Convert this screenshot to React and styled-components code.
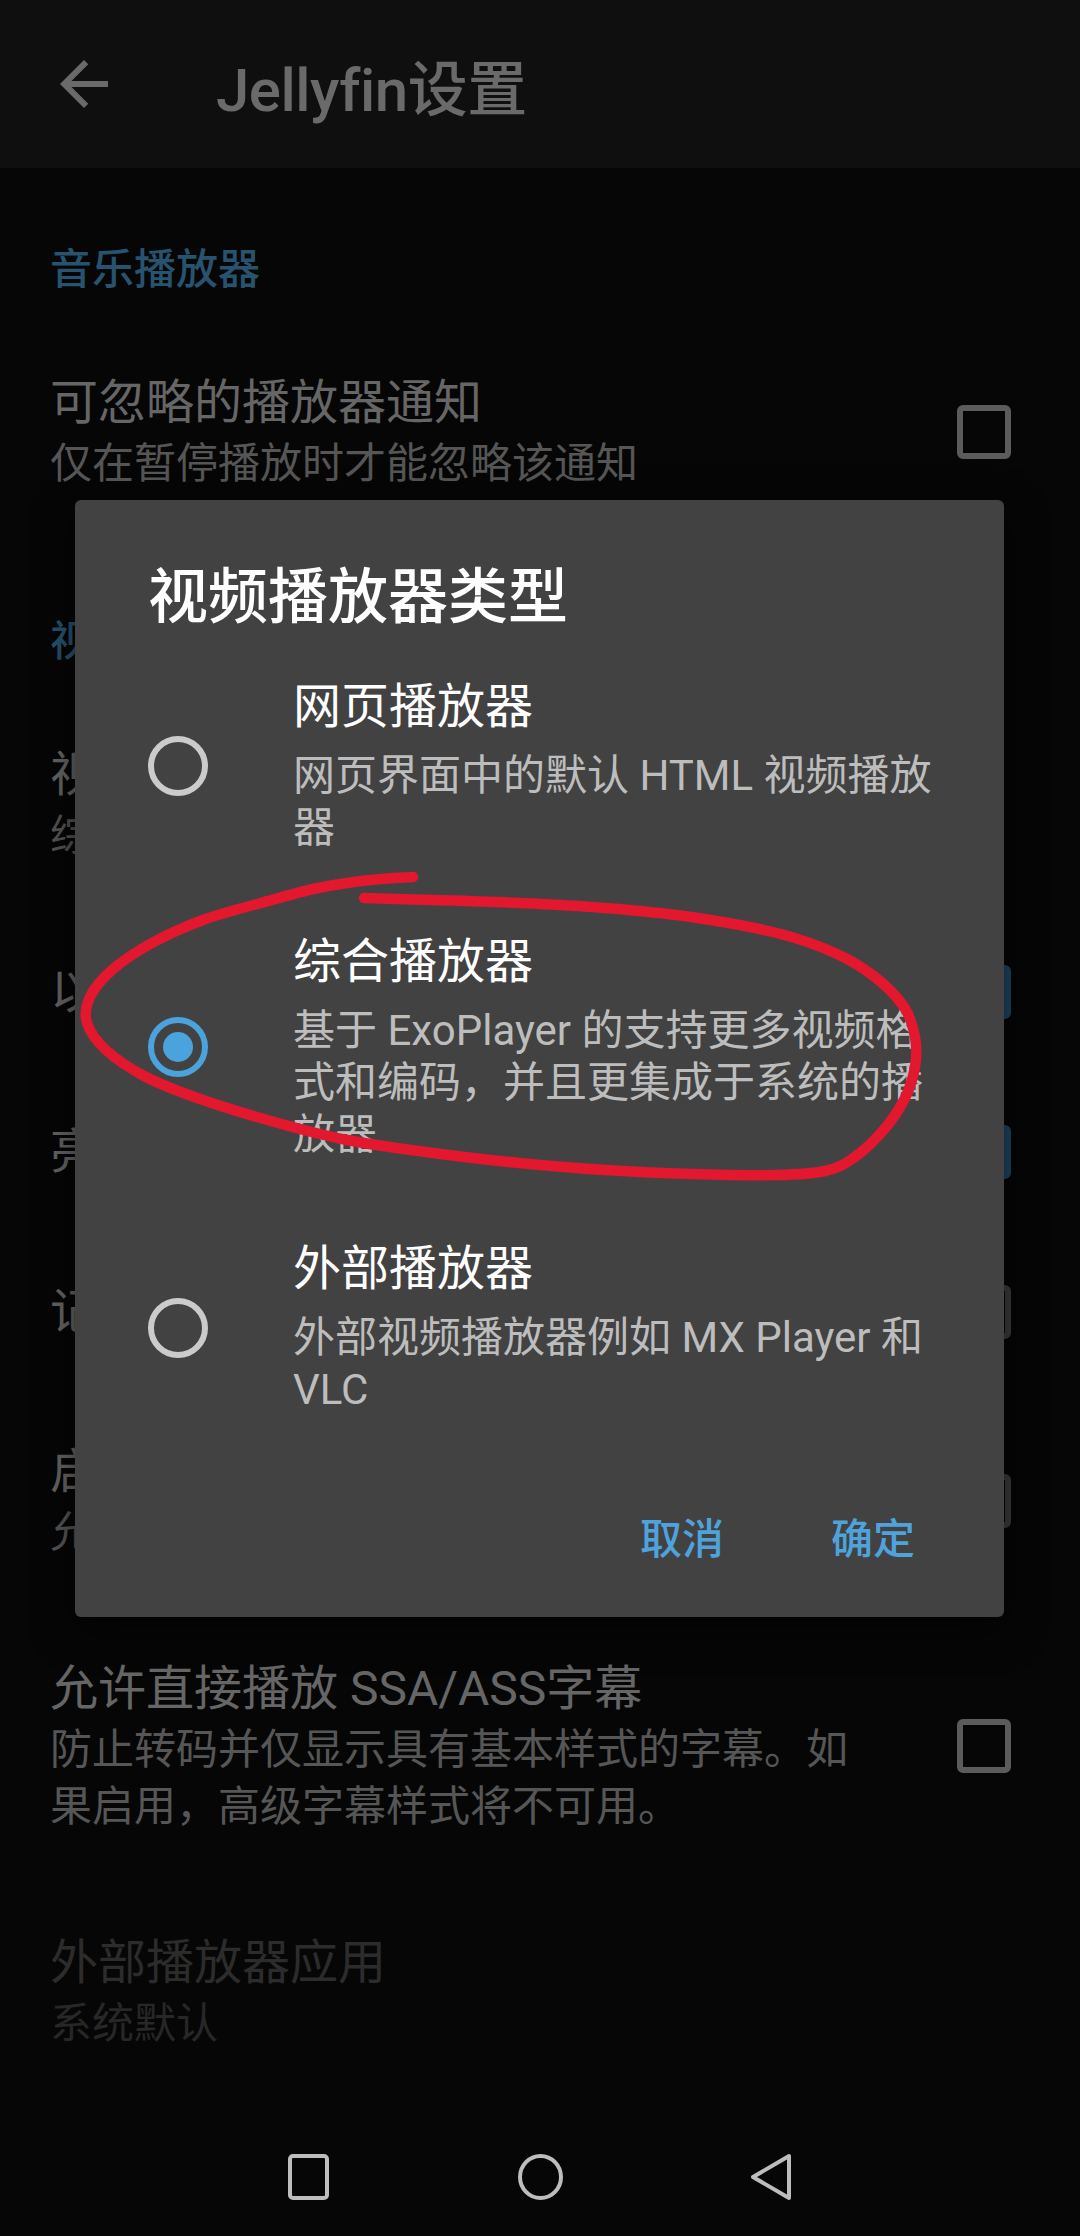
import React from 'react'
import styled, { createGlobalStyle } from 'styled-components'

const GlobalStyle = createGlobalStyle`
  html, body {
    margin: 0;
    padding: 0;
    background: #060606;
  }
  body {
    font-family: Roboto, "Noto Sans CJK SC", sans-serif;
  }
`

const prefs = [
  { type: 'category', title: '音乐播放器' },
  { title: '可忽略的播放器通知', summary: ['仅在暂停播放时才能忽略该通知'], box: 'off' },
  { type: 'category', title: '视频播放器' },
  { title: '视频播放器类型', summary: ['综合播放器'] },
  { title: '以横屏方向开始横屏视频', box: 'on' },
  { title: '亮度和音量手势', box: 'on' },
  { title: '记住亮度', box: 'dim' },
  { title: '启用后台音频', summary: ['允许在后台播放视频的音频'], box: 'dim' },
  {
    title: '允许直接播放 SSA/ASS字幕',
    summary: ['防止转码并仅显示具有基本样式的字幕。如果启用，高级字幕样式将不可用。'],
    box: 'off',
  },
  { title: '外部播放器应用', summary: ['系统默认'], disabled: true },
]

const options = [
  { title: '网页播放器', summary: '网页界面中的默认 HTML 视频播放器' },
  { title: '综合播放器', summary: '基于 ExoPlayer 的支持更多视频格式和编码，并且更集成于系统的播放器', checked: true },
  { title: '外部播放器', summary: '外部视频播放器例如 MX Player 和 VLC' },
]

// hand drawn red circle, traced from the screenshot
const scribble = [
  [413, 877], [370, 880], [318, 888], [261, 903], [203, 920], [152, 943], [112, 970],
  [90, 997], [87, 1023], [106, 1050], [146, 1077], [203, 1100], [278, 1123], [347, 1140],
  [433, 1153], [519, 1163], [605, 1170], [691, 1174], [777, 1175], [825, 1171], [852, 1159],
  [881, 1133], [904, 1100], [915, 1067], [915, 1037], [904, 1007], [875, 977], [835, 953],
  [777, 933], [691, 917], [605, 908], [519, 903], [433, 900], [364, 898],
]

const smoothPath = (pts) => {
  let d = `M${pts[0][0]},${pts[0][1]}`
  for (let i = 0; i < pts.length - 1; i++) {
    const p0 = pts[i - 1] || pts[i]
    const p1 = pts[i]
    const p2 = pts[i + 1]
    const p3 = pts[i + 2] || p2
    const c1x = p1[0] + (p2[0] - p0[0]) / 6
    const c1y = p1[1] + (p2[1] - p0[1]) / 6
    const c2x = p2[0] - (p3[0] - p1[0]) / 6
    const c2y = p2[1] - (p3[1] - p1[1]) / 6
    d += ` C${c1x.toFixed(1)},${c1y.toFixed(1)} ${c2x.toFixed(1)},${c2y.toFixed(1)} ${p2[0]},${p2[1]}`
  }
  return d
}

const App = () => {
  return (
    <>
      <GlobalStyle />
      <Screen>
        <AppBar>
          <BackButton>
            <svg width="72" height="72" viewBox="0 0 24 24">
              <path fill="#6a6a6a" d="M20 11H7.83l5.59-5.59L12 4l-8 8 8 8 1.41-1.41L7.83 13H20v-2z" />
            </svg>
          </BackButton>
          <BarTitle>Jellyfin设置</BarTitle>
        </AppBar>

        <PrefList>
          {prefs.map((p, i) =>
            p.type === 'category' ? (
              <Category key={i}>{p.title}</Category>
            ) : (
              <Pref key={i}>
                <PrefBody>
                  <PrefTitle $disabled={p.disabled}>{p.title}</PrefTitle>
                  {p.summary && <PrefSummary $disabled={p.disabled}>{p.summary}</PrefSummary>}
                </PrefBody>
                {p.box && <CheckBox $state={p.box} />}
              </Pref>
            )
          )}
        </PrefList>

        <NavBar>
          <NavSlot>
            <svg width="60" height="60" viewBox="0 0 60 60">
              <rect x="12" y="9" width="37" height="42" rx="3" fill="none" stroke="#bdbdbd" strokeWidth="4" />
            </svg>
          </NavSlot>
          <NavSlot>
            <svg width="60" height="60" viewBox="0 0 60 60">
              <ellipse cx="30.5" cy="30" rx="20.5" ry="21" fill="none" stroke="#bdbdbd" strokeWidth="4" />
            </svg>
          </NavSlot>
          <NavSlot>
            <svg width="60" height="60" viewBox="0 0 60 60">
              <path d="M47 9 L47 51 L11 30 Z" fill="none" stroke="#bdbdbd" strokeWidth="4" strokeLinejoin="round" />
            </svg>
          </NavSlot>
        </NavBar>

        <Dialog>
          <DialogTitle>视频播放器类型</DialogTitle>
          <OptionList>
            {options.map((o) => (
              <Option key={o.title}>
                <Radio $checked={o.checked} />
                <OptionText>
                  <OptionTitle>{o.title}</OptionTitle>
                  <OptionSummary>{o.summary}</OptionSummary>
                </OptionText>
              </Option>
            ))}
          </OptionList>
          <ButtonBar>
            <TextButton>取消</TextButton>
            <TextButton>确定</TextButton>
          </ButtonBar>
        </Dialog>

        <Annotation width="1080" height="2236" viewBox="0 0 1080 2236">
          <path
            d={smoothPath(scribble)}
            fill="none"
            stroke="#e3172d"
            strokeWidth="10.5"
            strokeLinecap="round"
            strokeLinejoin="round"
          />
        </Annotation>
      </Screen>
    </>
  )
}

const Screen = styled.div`
  position: relative;
  width: 1080px;
  height: 2236px;
  overflow: hidden;
  display: flex;
  flex-direction: column;
  background: #060606;
`

const AppBar = styled.header`
  height: 168px;
  flex-shrink: 0;
  display: flex;
  align-items: center;
  background: #0f0f0f;
`

const BackButton = styled.div`
  width: 72px;
  height: 72px;
  margin-left: 48px;
  display: flex;
`

const BarTitle = styled.h1`
  margin: 0 0 0 96px;
  font-size: 60px;
  font-weight: 500;
  color: #6a6a6a;
  letter-spacing: -0.5px;
`

const PrefList = styled.div`
  flex: 1;
  overflow: hidden;
`

const Category = styled.div`
  padding: 74px 48px 25px 50px;
  font-size: 42px;
  line-height: 56px;
  font-weight: 500;
  color: #27536f;
`

const Pref = styled.div`
  display: flex;
  align-items: center;
  gap: 87px;
  padding: 48px 69px 48px 50px;
`

const PrefBody = styled.div`
  flex: 1;
  min-width: 0;
`

const PrefTitle = styled.div`
  font-size: 48px;
  line-height: 64px;
  color: ${(p) => (p.$disabled ? '#2c2c2c' : '#666666')};
`

const PrefSummary = styled.div`
  font-size: 42px;
  line-height: 57px;
  color: ${(p) => (p.$disabled ? '#272727' : '#565656')};
`

const boxColors = {
  on: { border: '#1f4560', fill: '#1f4560' },
  off: { border: '#5b5b5b', fill: 'transparent' },
  dim: { border: '#3c3c3c', fill: 'transparent' },
}

const CheckBox = styled.div`
  width: 54px;
  height: 54px;
  flex-shrink: 0;
  box-sizing: border-box;
  border-radius: 6px;
  border: 6px solid ${(p) => boxColors[p.$state].border};
  background: ${(p) => boxColors[p.$state].fill};
`

const NavBar = styled.nav`
  height: 118px;
  flex-shrink: 0;
  display: flex;
  justify-content: center;
  align-items: center;
`

const NavSlot = styled.div`
  width: 232px;
  display: flex;
  justify-content: center;
`

const Dialog = styled.div`
  position: absolute;
  top: 500px;
  left: 75px;
  width: 929px;
  padding-top: 62px;
  background: #424242;
  border-radius: 6px;
  box-shadow: 0 12px 40px rgba(0, 0, 0, 0.6);
`

const DialogTitle = styled.h2`
  margin: 0;
  padding: 0 54px 4px 73px;
  font-size: 60px;
  line-height: 72px;
  font-weight: 500;
  color: #ffffff;
`

const OptionList = styled.div`
  padding: 0 54px 0 73px;
`

const Option = styled.div`
  display: flex;
  align-items: center;
  gap: 85px;
  padding: 39px 0;
`

const Radio = styled.div`
  position: relative;
  width: 60px;
  height: 60px;
  flex-shrink: 0;
  box-sizing: border-box;
  border-radius: 50%;
  border: 6px solid ${(p) => (p.$checked ? '#4aa3dc' : '#cbcbcb')};

  &::after {
    content: '';
    display: ${(p) => (p.$checked ? 'block' : 'none')};
    position: absolute;
    top: 9px;
    left: 9px;
    width: 30px;
    height: 30px;
    border-radius: 50%;
    background: #4aa3dc;
  }
`

const OptionText = styled.div`
  flex: 1;
  min-width: 0;
`

const OptionTitle = styled.div`
  font-size: 48px;
  line-height: 60px;
  color: #ffffff;
`

const OptionSummary = styled.div`
  margin-top: 13px;
  font-size: 42px;
  line-height: 52px;
  color: #bdbdbd;
`

const ButtonBar = styled.div`
  display: flex;
  justify-content: flex-end;
  gap: 59px;
  padding: 26px 65px 28px 0;
`

const TextButton = styled.div`
  height: 108px;
  padding: 0 24px;
  display: flex;
  align-items: center;
  font-size: 42px;
  font-weight: 500;
  color: #4ea3dc;
`

const Annotation = styled.svg`
  position: absolute;
  top: 0;
  left: 0;
  pointer-events: none;
`

export default App
